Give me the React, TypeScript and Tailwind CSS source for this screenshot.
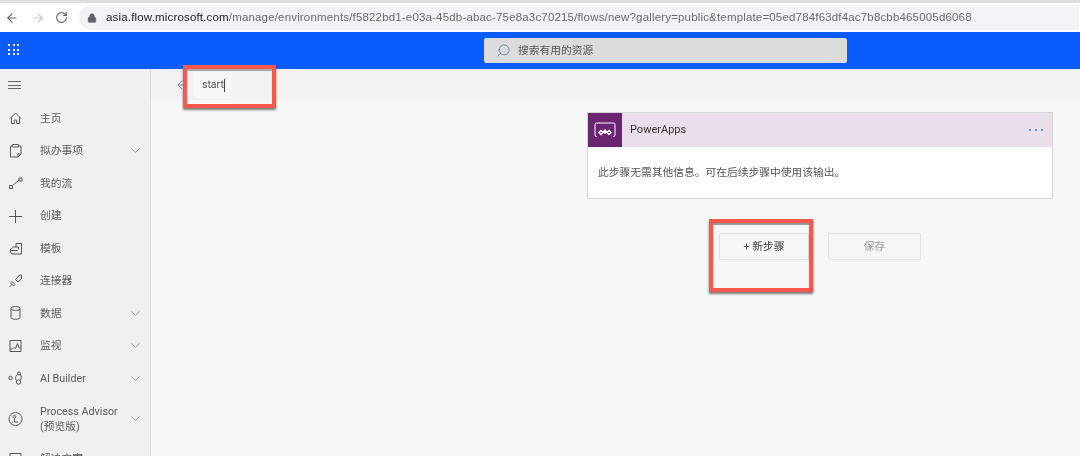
import { ArrowLeft, ArrowRight, ChevronDown, Lock, RotateCw, Search } from "lucide-react"
import type { ReactNode } from "react"

const font = { fontFamily: 'Roboto, "Noto Sans CJK SC", sans-serif' }

const Ico = ({ children }: { children: ReactNode }) => (
  <svg width="19" height="18" viewBox="0 0 19 18" fill="none" stroke="#555" strokeWidth="1" className="shrink-0">
    {children}
  </svg>
)

const icons: Record<string, ReactNode> = {
  home: <Ico><path d="M4 9.500l5.500-5.500 5.500 5.500M5.500 8.500v6h2.800v-3.500h2.400v3.500h2.800v-6" /></Ico>,
  clip: <Ico><path d="M6.500 4H4.500v11h7.500l3-3V4h-2M6.500 2.500h6v2.500h-6zM15 12h-3v3" /></Ico>,
  flow: <Ico><path d="M3.500 11.500h3v3h-3zM13 4h3v3h-3zM6.500 11.500L13 6" /></Ico>,
  plus: <Ico><path d="M9.500 3v13M3 9.500h13" /></Ico>,
  tpl: <Ico><path d="M4 11l3.500-3h2.500V4.500h5.500V15H5.500zM10 8h2.500v2.500M4.500 11.500h7" /></Ico>,
  conn: <Ico><path d="M3.500 15l2.500-2.500M6 9.500l3 3-1.500 1.500-3-3zM13.500 3h2v4l-3.500 3-2.500-2.500z" /></Ico>,
  data: <Ico><ellipse cx="9.500" cy="4.500" rx="4.500" ry="2" /><path d="M5 4.500v9c0 1 2 1.800 4.500 1.800s4.500-.8 4.500-1.800v-9" /></Ico>,
  mon: <Ico><path d="M4 3.500h11v11H4zM4 12h2.500l1.500-1.500 1.500 1 2-5 1.500 4.500H15" /></Ico>,
  ai: <Ico><circle cx="4.500" cy="9" r="1.700" /><circle cx="13" cy="4.500" r="1.500" /><circle cx="12.500" cy="13" r="2.200" /><path d="M11.800 5.500C9 7 9 10 10.500 11.500M14.300 5c1.200 2 1.200 4.500.200 6.200" /></Ico>,
  pa: <Ico><circle cx="9.500" cy="9" r="6.500" /><circle cx="8.500" cy="6.800" r="1.400" /><path d="M8.500 8.200V12h3.500M6 12h1" /></Ico>,
  sol: <Ico><path d="M4 3.500h11v11H4zM4 7h11" /></Ico>,
}

const nav = [
  { icon: "home", label: "主页" },
  { icon: "clip", label: "拟办事项", more: true },
  { icon: "flow", label: "我的流" },
  { icon: "plus", label: "创建" },
  { icon: "tpl", label: "模板" },
  { icon: "conn", label: "连接器" },
  { icon: "data", label: "数据", more: true },
  { icon: "mon", label: "监视", more: true },
  { icon: "ai", label: "AI Builder", more: true },
]

const NavRow = ({ icon, label, more, tall }: { icon: string; label: ReactNode; more?: boolean; tall?: boolean }) => (
  <div className={`flex items-center pl-[6px] pr-[7px] shrink-0 ${tall ? "h-[48px]" : "h-[32.500px]"}`}>
    <div className="w-[34px] flex">{icons[icon]}</div>
    <div className="flex-1 text-[10.750px] leading-[15px] text-[#5a5a5a]">{label}</div>
    {more && <ChevronDown size={15} strokeWidth={1} color="#666" />}
  </div>
)

export default function App() {
  return (
    <div className="w-[1080px] h-[456px] overflow-hidden relative flex flex-col bg-[#f7f7f7] blur-[0.3px]" style={font}>
      {/* browser bar */}
      <div className="h-[32px] shrink-0 bg-white border-t-[3px] border-[#dedede] flex items-center pl-[5px]">
        <ArrowLeft size={14} color="#5f6368" />
        <ArrowRight size={14} color="#c4c4c4" className="ml-[12px]" />
        <RotateCw size={13} color="#5f6368" className="ml-[10px]" />
        <div className="ml-[11px] w-[1000px] h-[25px] rounded-l-full bg-[#f1f3f4] flex items-center pl-[8px] gap-[9px]">
          <Lock size={10} fill="#5f6368" color="#5f6368" />
          <span className="text-[11.500px] tracking-[0.170px] text-[#6a6a6a] whitespace-nowrap" style={{ fontFamily: '"Liberation Sans", sans-serif' }}>
            <span className="text-[#222]">asia.flow.microsoft.com</span>
            /manage/environments/f5822bd1-e03a-45db-abac-75e8a3c70215/flows/new?gallery=public&amp;template=05ed784f63df4ac7b8cbb465005d6068
          </span>
        </div>
      </div>

      {/* blue header */}
      <div className="h-[37px] shrink-0 bg-[#0b5cff] flex items-center pl-[484px] relative">
        <div className="absolute left-[8px] top-[12px] grid grid-cols-3 gap-[2.500px]">
          {Array.from({ length: 9 }).map((_, i) => (
            <div key={i} className="w-[2px] h-[2px] bg-white" />
          ))}
        </div>
        <div className="w-[363px] h-[25px] rounded-[2px] bg-[#dcdcdc] flex items-center pl-[12px] gap-[7px]">
          <Search size={15} strokeWidth={1.200} color="#3f6fc4" className="-scale-x-100" />
          <span className="text-[10.750px] text-[#555] pt-[2px]">搜索有用的资源</span>
        </div>
      </div>

      <div className="flex-1 flex min-h-0">
        {/* sidebar */}
        <div className="w-[151px] shrink-0 bg-[#f0f0f0] border-r border-[#dcdcdc] flex flex-col overflow-hidden">
          <div className="h-[33px] shrink-0 flex items-center pl-[8px] pb-[1px]">
            <div className="w-[13px] flex flex-col gap-[2.500px]">
              <div className="h-px bg-[#666]" />
              <div className="h-px bg-[#666]" />
              <div className="h-px bg-[#666]" />
            </div>
          </div>
          {nav.map((n) => (
            <NavRow key={n.label} {...n} />
          ))}
          <NavRow
            icon="pa"
            tall
            more
            label={
              <>
                Process Advisor
                <br />
                (预览版)
              </>
            }
          />
          <NavRow icon="sol" label="解决方案" />
        </div>

        {/* main */}
        <div className="flex-1 flex flex-col min-w-0">
          <div className="h-[31px] shrink-0 bg-[#f2f2f2] flex items-center pl-[24px]">
            <ArrowLeft size={14} strokeWidth={1.200} color="#3f5fa8" />
            <div className="ml-[5px] w-[38px] h-[26px] bg-[#f7f7f7] flex items-center pl-[8px] pt-[1px] text-[10.500px] text-[#555]">
              start<span className="w-px h-[13px] bg-[#444]" />
            </div>
          </div>

          <div className="flex-1 flex flex-col items-start pl-[436px] pt-[12px]">
            {/* trigger card */}
            <div className="w-[466px] border border-[#d4d4d4] bg-white">
              <div className="h-[34px] bg-[#e9deea] flex items-center">
                <div className="w-[34px] h-[34px] bg-[#6a2470] flex items-center justify-center">
                  <svg width="24" height="18" viewBox="0 0 24 18" fill="none">
                    <path d="M4 15.500H3.500A1.500 1.500 0 0 1 2 14V3.500A1.500 1.500 0 0 1 3.500 2h17A1.500 1.500 0 0 1 22 3.500V14a1.500 1.500 0 0 1-1.500 1.500H20" stroke="#fff" strokeWidth="1" />
                    <path d="M8 8.500l3 3-3 3-3-3zM16 8.500l3 3-3 3-3-3zM12 8l2.500 2.500-2.500 2.500-2.500-2.500z" fill="#fff" />
                    <path d="M8 10.500l1 1-1 1-1-1zM16 10.500l1 1-1 1-1-1z" fill="#6a2470" />
                  </svg>
                </div>
                <span className="ml-[8px] pt-[1px] text-[11px] text-[#333]">PowerApps</span>
                <div className="ml-auto mr-[9px] flex gap-[4px]">
                  <div className="w-[2px] h-[2px] rounded-full bg-[#2f7fe0]" />
                  <div className="w-[2px] h-[2px] rounded-full bg-[#2f7fe0]" />
                  <div className="w-[2px] h-[2px] rounded-full bg-[#2f7fe0]" />
                </div>
              </div>
              <div className="h-[51px] flex items-center pl-[10px] pt-[1px] text-[10.750px] text-[#555]">
                此步骤无需其他信息。可在后续步骤中使用该输出。
              </div>
            </div>

            {/* actions */}
            <div className="flex gap-[19px] mt-[34px] ml-[132px]">
              <div className="w-[90px] h-[27px] border border-[#e2e2e2] bg-[#f7f7f7] flex items-center justify-center pt-[2px] text-[10.750px] text-[#444]">
                + 新步骤
              </div>
              <div className="w-[93px] h-[27px] border border-[#e2e2e2] bg-[#f7f7f7] flex items-center justify-center pt-[2px] text-[10.750px] text-[#999]">
                保存
              </div>
            </div>
          </div>
        </div>
      </div>

      {/* red annotation boxes */}
      <div className="absolute left-[183px] top-[65px] w-[93px] h-[43px] border-[4px] border-[#f9584c] shadow-[0_2px_2px_rgba(0,0,0,0.5),inset_0_2px_1px_rgba(0,0,0,0.3)]" />
      <div className="absolute left-[709px] top-[219px] w-[104px] h-[73px] border-[4px] border-[#f9584c] shadow-[0_2px_2px_rgba(0,0,0,0.5),inset_0_2px_1px_rgba(0,0,0,0.4)]" />
    </div>
  )
}
